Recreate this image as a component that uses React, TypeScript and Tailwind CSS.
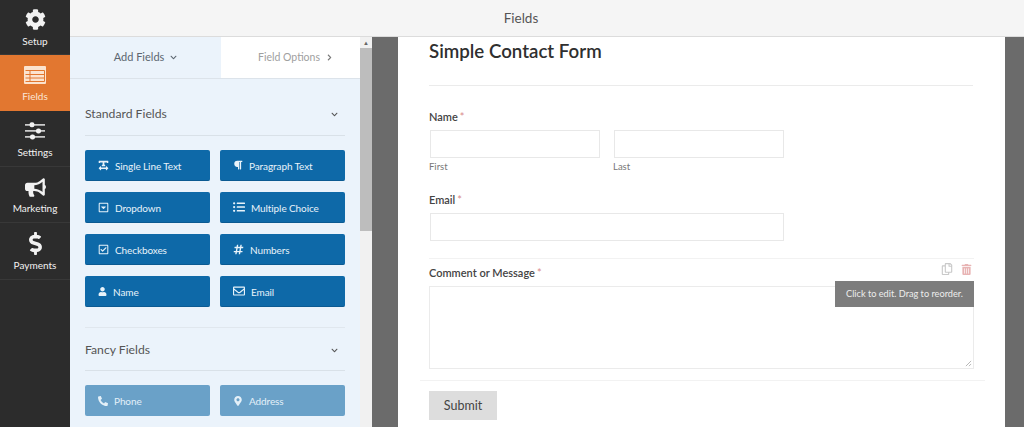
import type { ComponentType } from "react";
import {
  FaBullhorn,
  FaChevronDown,
  FaChevronRight,
  FaCog,
  FaDollarSign,
  FaHashtag,
  FaListUl,
  FaMapMarkerAlt,
  FaParagraph,
  FaPhoneAlt,
  FaRegCaretSquareDown,
  FaRegCheckSquare,
  FaRegCopy,
  FaRegEnvelope,
  FaTextWidth,
  FaTrashAlt,
  FaUser,
} from "react-icons/fa";

type Icon = ComponentType<{ className?: string }>;

const FormIcon = ({ className }: { className?: string }) => (
  <svg viewBox="0 0 22 18" className={className}>
    <rect width="22" height="18" rx="1" fill="#fbe3cf" />
    <path d="M1.5 4.5h19M1.5 8.5h19M1.5 12h19M6 5v10.5M1.5 15.5h19V4.5" fill="none" stroke="#e27730" strokeWidth="1" />
  </svg>
);

const SlidersIcon = ({ className }: { className?: string }) => (
  <svg viewBox="0 0 20 18" className={className} fill="#f2f2f2">
    <rect y="2.2" width="20" height="1.4" />
    <rect y="8.2" width="20" height="1.4" />
    <rect y="14.2" width="20" height="1.4" />
    <rect x="4.5" y="0.3" width="5" height="5" rx="2.2" />
    <rect x="11" y="6.4" width="5" height="5" rx="2.2" />
    <rect x="5" y="12.4" width="5" height="5" rx="2.2" />
  </svg>
);

const navItems: { label: string; icon: Icon; active?: boolean; iconClass: string; height: string }[] = [
  { label: "Setup", icon: FaCog, iconClass: "text-[21px]", height: "h-[55px]" },
  { label: "Fields", icon: FormIcon, active: true, iconClass: "w-[22px] h-[18px]", height: "h-[56px]" },
  { label: "Settings", icon: SlidersIcon, iconClass: "w-[20px] h-[18px]", height: "h-[56px]" },
  { label: "Marketing", icon: FaBullhorn, iconClass: "text-[21px]", height: "h-[56px]" },
  { label: "Payments", icon: FaDollarSign, iconClass: "text-[23px]", height: "h-[57px]" },
];

const standardFields: { label: string; icon: Icon; iconClass?: string }[] = [
  { label: "Single Line Text", icon: FaTextWidth, iconClass: "text-[11px]" },
  { label: "Paragraph Text", icon: FaParagraph },
  { label: "Dropdown", icon: FaRegCaretSquareDown, iconClass: "text-[11px]" },
  { label: "Multiple Choice", icon: FaListUl, iconClass: "text-[12px]" },
  { label: "Checkboxes", icon: FaRegCheckSquare, iconClass: "text-[11px]" },
  { label: "Numbers", icon: FaHashtag, iconClass: "text-[11px]" },
  { label: "Name", icon: FaUser, iconClass: "text-[9px]" },
  { label: "Email", icon: FaRegEnvelope, iconClass: "text-[12px]" },
];

const fancyFields: { label: string; icon: Icon }[] = [
  { label: "Phone", icon: FaPhoneAlt },
  { label: "Address", icon: FaMapMarkerAlt },
];

const FieldButton = ({
  label,
  icon: Icon,
  iconClass = "text-[10px]",
  faded,
}: {
  label: string;
  icon: Icon;
  iconClass?: string;
  faded?: boolean;
}) => (
  <div
    className={`h-[31px] rounded-[2px] pl-[13px] flex items-center gap-[6px] text-[10px] tracking-[-0.1px] ${
      faded ? "bg-[#6aa1c8] text-[#e4f0f8]" : "bg-[#0e69a8] text-[#e8f3fa] border-b border-[#0b5a92]"
    }`}
  >
    <Icon className={`${iconClass} shrink-0`} />
    <span className="pt-[2px]">{label}</span>
  </div>
);

const SectionHead = ({ title, extra = "h-[42px]" }: { title: string; extra?: string }) => (
  <div className={`${extra} flex items-center justify-between border-b border-[#d9e1e8] pr-[7px] text-[#555]`}>
    <span className="text-[12.2px]">{title}</span>
    <FaChevronDown className="text-[7px]" />
  </div>
);

const Label = ({ text }: { text: string }) => (
  <div className="text-[11px] leading-[14px] font-semibold text-[#444]">
    {text}
    <span className="text-[#d98a8a] ml-[2px] font-normal">*</span>
  </div>
);

const App = () => {
  return (
    <div
      className="h-screen w-full flex overflow-hidden bg-[#6b6b6b]"
      style={{ fontFamily: 'Lato, "Open Sans", sans-serif' }}
    >
      <aside className="w-[70px] shrink-0 bg-[#2c2c2c] text-white">
        {navItems.map(({ label, icon: Icon, active, iconClass, height }) => (
          <div
            key={label}
            className={`${height} flex flex-col items-center justify-center gap-[3px] border-b ${
              active ? "bg-[#e27730] border-[#e27730] text-[#fbe6d6]" : "border-[#383838] text-[#f2f2f2]"
            }`}
          >
            <div className="h-[24px] flex items-center">
              <Icon className={iconClass} />
            </div>
            <span className="text-[10px] leading-[12px]">{label}</span>
          </div>
        ))}
      </aside>

      <div className="flex-1 min-w-0 flex flex-col">
        <header className="h-[37px] shrink-0 bg-[#f5f5f5] border-b border-[#dcdcdc] flex items-center justify-center pr-[52px] text-[13.5px] text-[#555]">
          Fields
        </header>

        <div className="flex-1 min-h-0 flex">
          <div className="w-[290px] shrink-0 bg-[#ebf3fb]">
            <div className="h-[42px] flex border-b border-[#dce3ea] text-[11px]">
              <div className="w-[151px] flex items-center justify-center gap-[6px] text-[#5c6670]">
                Add Fields <FaChevronDown className="text-[7px]" />
              </div>
              <div className="flex-1 bg-white flex items-center justify-center gap-[6px] pl-[10px] text-[10.5px] text-[#a0a0a0]">
                Field Options <FaChevronRight className="text-[7px] text-[#777]" />
              </div>
            </div>

            <div className="pl-[15px] pr-[15px] pt-[15px]">
              <SectionHead title="Standard Fields" />
              <div className="grid grid-cols-2 gap-x-[10px] gap-y-[11px] pt-[14px] pb-[20px] border-b border-[#e0e7ee]">
                {standardFields.map((f) => (
                  <FieldButton key={f.label} {...f} />
                ))}
              </div>
              <SectionHead title="Fancy Fields" extra="h-[43px] pt-[3px]" />
              <div className="grid grid-cols-2 gap-x-[10px] pt-[14px]">
                {fancyFields.map((f) => (
                  <FieldButton key={f.label} {...f} faded />
                ))}
              </div>
            </div>
          </div>

          <div className="w-[12px] shrink-0 bg-[#f1f1f1] flex flex-col items-center">
            <div className="h-[11px] text-[6px] leading-[11px] text-[#666]">▲</div>
            <div className="w-full h-[183px] bg-[#bdbdbd]" />
          </div>

          <div className="w-[26px] shrink-0 bg-[#6b6b6b]" />

          <main className="w-[607px] shrink-0 bg-white pt-[2px] px-[31px]">
            <h1 className="text-[18.7px] leading-[24px] font-semibold text-[#2f2f2f]">Simple Contact Form</h1>
            <div className="mt-[22px] h-px w-[544px] bg-[#ebebeb]" />

            <div className="mt-[24px]">
              <Label text="Name" />
            </div>
            <div className="mt-[6px] ml-px flex gap-[14px]">
              <div>
                <div className="w-[170px] h-[28px] border border-[#e8e8e8]" />
                <div className="-ml-px mt-[2px] pt-px text-[9.5px] leading-[12px] text-[#777]">First</div>
              </div>
              <div>
                <div className="w-[170px] h-[28px] border border-[#e8e8e8]" />
                <div className="-ml-px mt-[2px] pt-px text-[9.5px] leading-[12px] text-[#777]">Last</div>
              </div>
            </div>

            <div className="mt-[20px]">
              <Label text="Email" />
            </div>
            <div className="mt-[6px] ml-px w-[354px] h-[28px] border border-[#e8e8e8]" />

            <div className="relative mt-[17px] border-t border-[#f2f2f2] pt-[7px] w-[545px]">
              <Label text="Comment or Message" />
              <div className="absolute right-[2px] top-[4px] flex gap-[8px] text-[12px]">
                <FaRegCopy className="text-[#c9c9c9]" />
                <FaTrashAlt className="text-[11px] mt-px text-[#e8b4b4]" />
              </div>
              <div className="relative mt-[6px] h-[83px] border border-[#ebebeb]">
                <svg viewBox="0 0 8 8" className="absolute right-px bottom-px w-[7px] h-[7px]">
                  <path d="M1 7 7 1M4.5 7 7 4.5" stroke="#999" strokeWidth="0.8" fill="none" />
                </svg>
              </div>
              <div className="absolute right-0 top-[22px] w-[139px] h-[26px] bg-[#7d7d7d] flex items-center justify-center text-[9.2px] text-[#ededed]">
                Click to edit. Drag to reorder.
              </div>
            </div>
            <div className="mt-[11px] -ml-[9px] h-px w-[565px] bg-[#f2f2f2]" />

            <div className="mt-[10px] w-[68px] h-[29px] bg-[#dddddd] flex items-center justify-center pt-px text-[12.5px] text-[#444]">
              Submit
            </div>
          </main>

          <div className="flex-1 bg-[#6b6b6b]" />
        </div>
      </div>
    </div>
  );
};

export default App;
